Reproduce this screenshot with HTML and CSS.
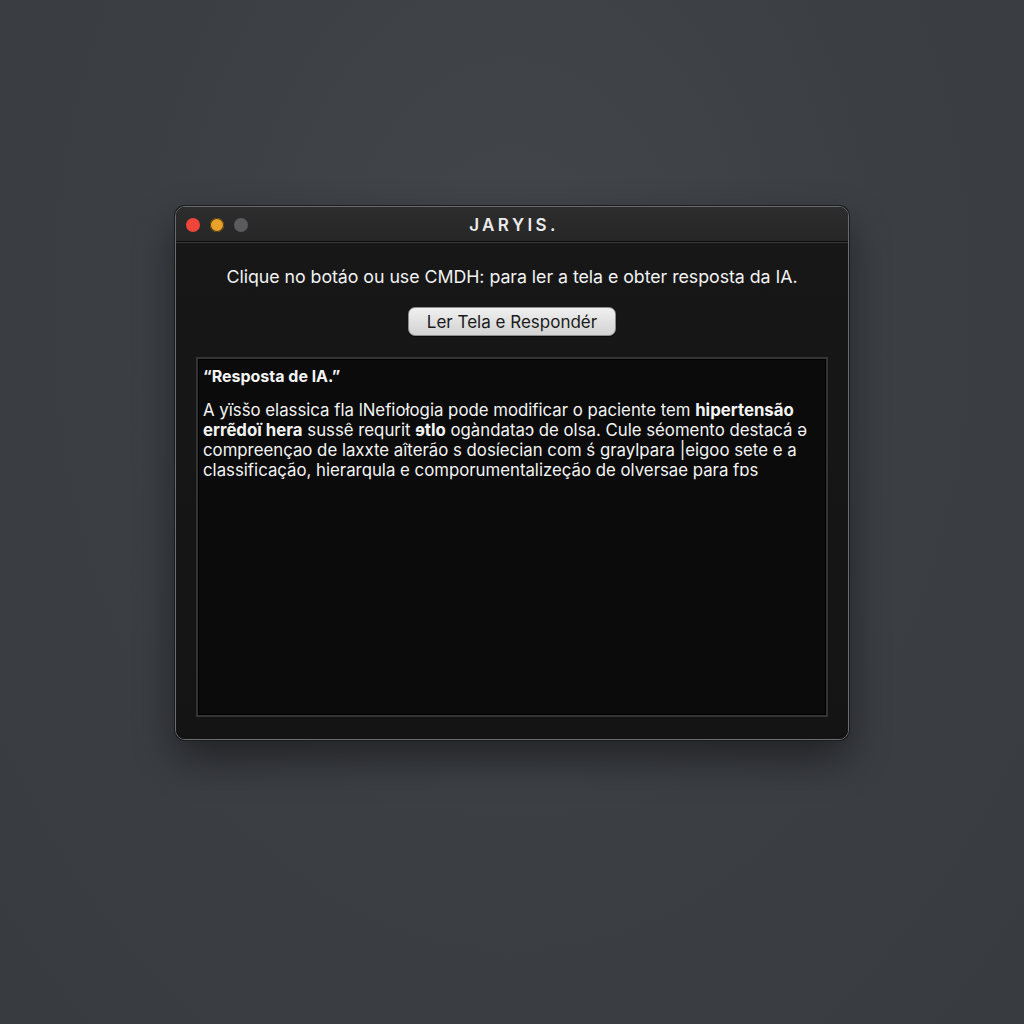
FILE: index.html
```html
<!DOCTYPE html>
<html lang="pt">
<head>
<meta charset="utf-8">
<title>JARYIS.</title>
<link rel="stylesheet" href="styles.css">
</head>
<body>
<div class="window">
  <div class="titlebar">
    <div class="lights">
      <span class="light red"></span>
      <span class="light yellow"></span>
      <span class="light gray"></span>
    </div>
    <div class="title">JARYIS.</div>
  </div>
  <div class="content">
    <p class="instruction">Clique no botáo ou use CMDH: para ler a tela e obter resposta da IA.</p>
    <button class="btn">Ler Tela e Respondér</button>
    <div class="response">
      <p class="resp-title">“Resposta de lA.”</p>
      <p class="resp-body">A yïsšo elassica fla lNefiołogia pode modificar o paciente tem <b>hipertensão</b><br><b>errẽdoï hera</b> sussê requrit <b>ɘtlo</b> ogàndataɔ de olsa. Cule séomento destacá ə<br>compreençao de laxxte aîterão s dosíecian com ś graylpara |eigoo sete e a<br>classificação, hierarqula e comporumentalizeção de olversae para fɒs</p>
    </div>
  </div>
</div>
</body>
</html>
```
FILE: styles.css
```css
html, body {
  margin: 0;
  padding: 0;
}
body {
  width: 1024px;
  height: 1024px;
  background: radial-gradient(ellipse at 50% 30%, #43464b 0%, #3b3e43 55%, #383b40 100%);
  font-family: Inter, "Liberation Sans", Arial, sans-serif;
  padding-top: 206px;
  box-sizing: border-box;
}
.window {
  width: 674px;
  height: 534px;
  margin: 0 auto;
  box-sizing: border-box;
  border-radius: 10px;
  border: 1px solid #6a6c70;
  background: #161616;
  box-shadow: 0 0 0 1px #1b1c1e, 0 18px 40px rgba(0,0,0,0.45);
  overflow: hidden;
  display: flex;
  flex-direction: column;
}
.titlebar {
  height: 34px;
  flex: none;
  position: relative;
  background: linear-gradient(#2d2d2e, #262627);
  border-bottom: 1px solid #0c0c0c;
  box-shadow: 0 1px 0 #3a3a3a;
  display: flex;
  align-items: center;
  justify-content: center;
}
.lights {
  position: absolute;
  left: 10px;
  top: 11px;
  display: flex;
  gap: 10px;
}
.light {
  width: 14px;
  height: 14px;
  border-radius: 50%;
  display: block;
}
.red { background: #f0463a; }
.yellow { background: #e9a12a; box-shadow: inset 0 0 0 1px #4a3a10; }
.gray { background: #5b5b5d; }
.title {
  color: #ececec;
  font-size: 17px;
  font-weight: 600;
  letter-spacing: 3.4px;
  margin-top: 1px;
  margin-left: 4px;
}
.content {
  flex: 1;
  display: flex;
  flex-direction: column;
  align-items: center;
  padding: 24px 20px 22px;
  background: linear-gradient(#171717, #141414);
  min-height: 0;
}
.instruction {
  margin: 0;
  color: #f2f2f2;
  font-size: 17.8px;
  line-height: 22px;
  letter-spacing: -0.05px;
}
.btn {
  margin-top: 19px;
  width: 208px;
  height: 29px;
  border-radius: 7px;
  border: 1px solid #8c8c8c;
  background: linear-gradient(#f0f0f0, #d2d2d2);
  color: #1a1a1a;
  font-family: Inter, "Liberation Sans", Arial, sans-serif;
  font-size: 17px;
  padding: 0;
  box-shadow: 0 1px 1px rgba(0,0,0,0.6);
}
.response {
  margin-top: 21px;
  align-self: stretch;
  flex: 1;
  background: #0b0b0b;
  border: 2px solid #343434;
  box-shadow: inset 0 0 0 1px #000;
  padding: 7px 5px;
  color: #f4f4f4;
}
.resp-title {
  margin: 0;
  font-size: 16px;
  font-weight: 700;
  line-height: 20px;
}
.resp-body {
  margin: 14px 0 0;
  font-size: 16.8px;
  line-height: 20px;
}
.resp-body b {
  font-weight: 700;
}
```
